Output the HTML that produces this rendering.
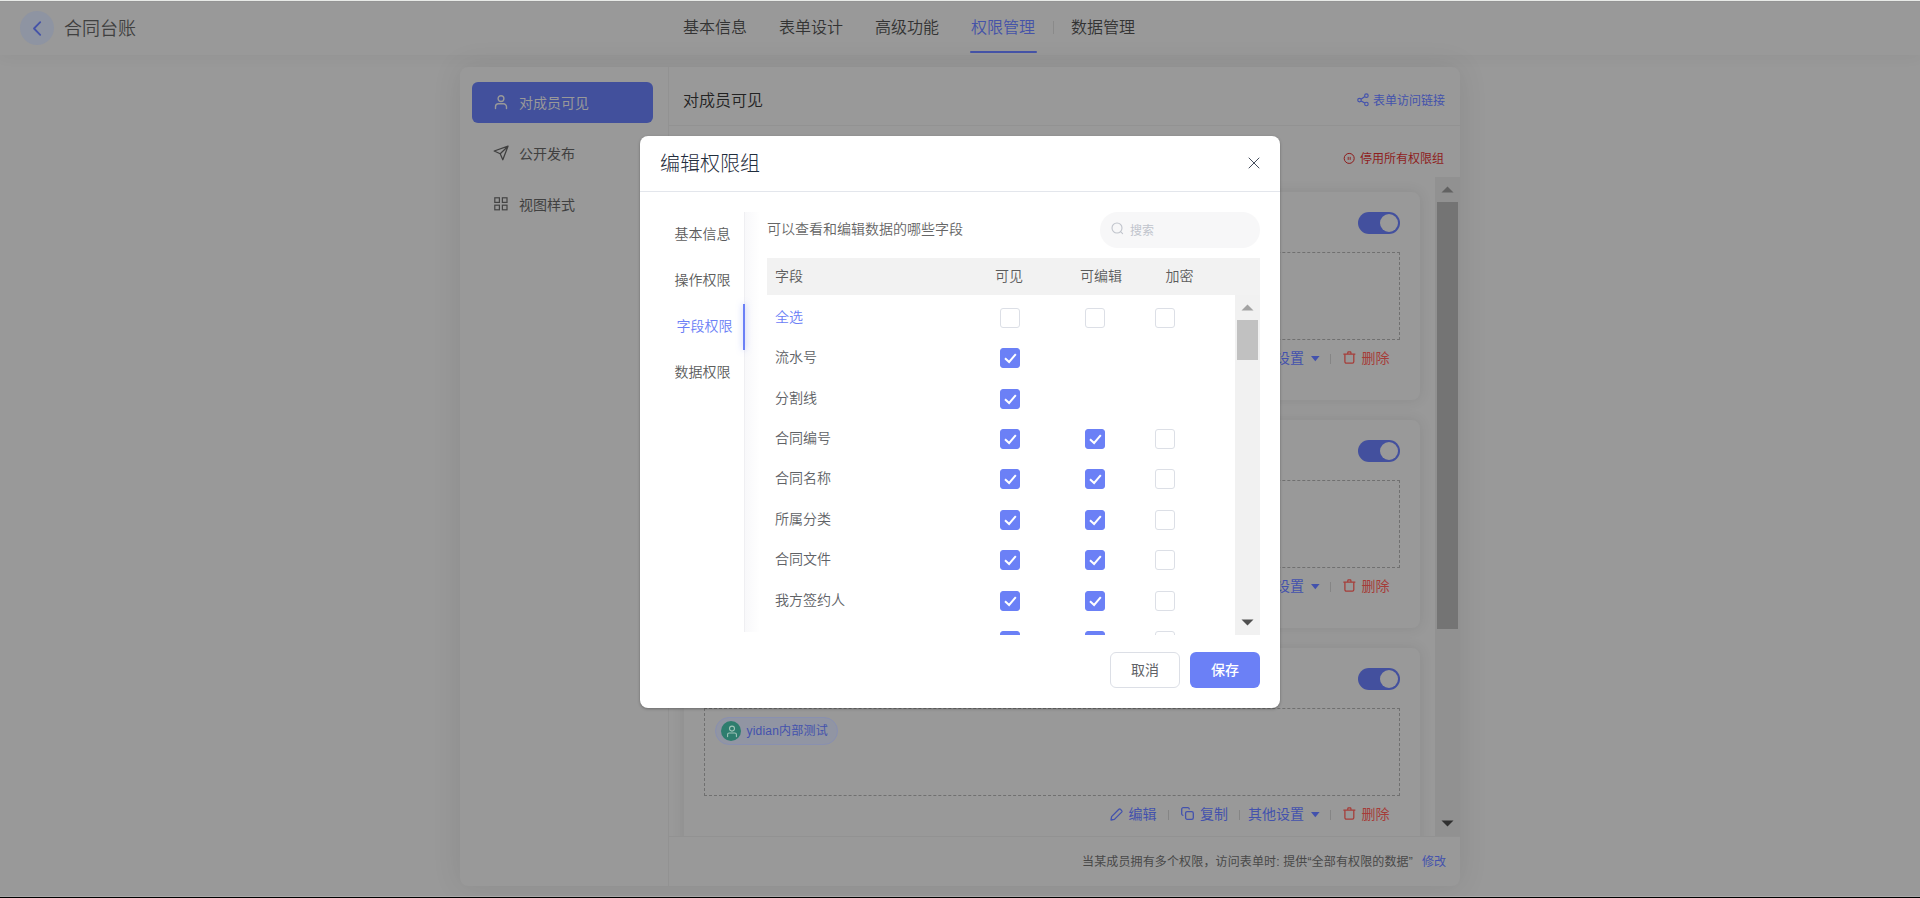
<!DOCTYPE html>
<html lang="zh-CN">
<head>
<meta charset="utf-8">
<title>合同台账 - 权限管理</title>
<style>
*{box-sizing:border-box;margin:0;padding:0}
html,body{width:1920px;height:898px;overflow:hidden}
body{background:#999;font-family:"Liberation Sans","Noto Sans CJK SC",sans-serif;font-size:14px;color:#333;position:relative;-webkit-font-smoothing:antialiased}
.abs{position:absolute}
.t{position:absolute;white-space:nowrap;line-height:1}
svg{position:absolute;overflow:visible}

/* ===== dimmed background page ===== */
#topline{left:0;top:0;width:1920px;height:1px;background:#e8eae7;z-index:50}
#topline2{left:0;top:1px;width:1920px;height:1px;background:#949494;z-index:50}
#botline{left:0;top:896px;width:1920px;height:1px;background:#a8a8a8;z-index:50}
#botline2{left:0;top:897px;width:1920px;height:1px;background:#000;z-index:50}

#header{left:0;top:0;width:1920px;height:55px;background:#999;box-shadow:0 2px 14px rgba(0,0,0,.045)}
#back{left:20px;top:10.5px;width:34px;height:34px;border-radius:50%;background:#8e94a2}
#apptitle{left:64px;top:20px;font-size:18px;color:#404040;font-weight:350}
.nav{top:19.5px;font-size:16px;color:#333;font-weight:350}
.nav.on{color:#4553a8}
#navline{left:970px;top:51px;width:67px;height:2px;border-radius:2px;background:#4553a8}
#navsep{left:1052.5px;top:21px;width:1px;height:13px;background:#8a8a8a}

#panel{left:460px;top:67px;width:1000px;height:819px;background:#999;border-radius:8px;box-shadow:0 0 30px rgba(0,0,0,.09)}
#sidediv{left:668px;top:67px;width:1px;height:819px;background:#929292}
#sideon{left:472px;top:82px;width:181px;height:41px;border-radius:6px;background:#42509c}
.side{font-size:14px;color:#404040;left:519px;font-weight:400}
#ctitle{left:683px;top:93px;font-size:16px;color:#222;font-weight:350}
#cdiv{left:669px;top:125px;width:791px;height:1px;background:#929292}
#fdiv{left:669px;top:836px;width:791px;height:1px;background:#929292}

#list{left:669px;top:177px;width:766px;height:659px;background:#999;overflow:hidden}
.card{left:15px;width:736px;height:208px;background:#999;border-radius:8px;box-shadow:0 0 14px rgba(0,0,0,.09)}
.dash{left:20px;top:60px;width:696px;height:88px;border:1px dashed #707070}
.sw{left:674px;top:20px;width:42px;height:22px;border-radius:11px;background:#43509e}
.sw i{position:absolute;right:2px;top:2px;width:18px;height:18px;border-radius:50%;background:#999}
.act{top:159px;font-size:14px}
.blue{color:#4352ad}
.red{color:#a63c38}
.vsep{top:162px;width:1px;height:10px;background:#858585}
.tag{left:31px;top:69px;width:123px;height:28px;border-radius:14px;background:#9195a3;border:1px solid #8990b0}
.ava{left:5px;top:3px;width:20px;height:20px;border-radius:50%;background:#2e7d6e}

#vtrack{left:1435px;top:177px;width:25px;height:659px;background:#919191}
#vthumb{left:1437px;top:202px;width:21px;height:427px;background:#747474}

/* ===== modal ===== */
#modal{left:640px;top:136px;width:640px;height:572px;background:#fff;border-radius:8px;z-index:20;box-shadow:0 1px 3px rgba(0,0,0,.3)}
#mtitle{left:20px;top:17.8px;font-size:20px;color:#1f2d3d;font-weight:300}
#mdiv{left:0;top:55px;width:640px;height:1px;background:#e3e6ec}
.mtab{font-size:14px;color:#5c5c5c;left:34.5px;font-weight:350}
#mtabborder{left:104px;top:76px;width:16px;height:420px;background:linear-gradient(90deg,#efeff2 0,#efeff2 1px,#f8f8fa 1px,#fff 16px)}
#mtabon{left:103px;top:168px;width:2px;height:46px;background:#6b80f6;box-shadow:0 0 6px rgba(107,128,246,.55)}
#mdesc{left:127px;top:86px;font-size:14px;color:#666;font-weight:350}
#search{left:460px;top:76px;width:160px;height:36px;border-radius:18px;background:#f7f7f8}
#search .t{left:30px;top:13px;font-size:12px;color:#c0c4cc}
#thead{left:127px;top:122px;width:493px;height:37px;background:#f2f2f2}
.th{top:133px;font-size:14px;color:#5c5c5c;font-weight:350}
#tbody{left:127px;top:159px;width:468px;height:340px;overflow:hidden}
.row{position:absolute;left:0;width:468px;height:40px}
.row .t{left:8px;top:12px;font-size:14px;color:#606266;font-weight:350}
.cb{position:absolute;top:10px;width:20px;height:20px;border-radius:3px;border:1px solid #dcdfe6;background:#fff}
.cb.on{background:#6b80f6;border-color:#6b80f6}
.cb svg{left:-1px;top:-1px}
.c1{left:233px}.c2{left:318px}.c3{left:388px}
#strack{left:595px;top:159px;width:25px;height:340px;background:#f1f1f1}
#sthumb{left:597px;top:184px;width:21px;height:40px;background:#c1c1c1}
.btn{top:516px;width:70px;height:36px;border-radius:6px;font-size:14px;text-align:center;line-height:34px}
#cancel{left:470px;border:1px solid #dcdfe6;color:#606266;background:#fff}
#save{left:550px;background:#6b80f6;color:#fff;font-weight:500;line-height:36px}
</style>
</head>
<body>
<!-- header -->
<div id="header" class="abs">
  <div id="back" class="abs"></div>
  <svg style="left:32px;top:20.5px" width="10" height="15" viewBox="0 0 10 15"><path d="M8.2 1.2 L2 7.5 L8.2 13.8" fill="none" stroke="#4553a8" stroke-width="1.8" stroke-linecap="round" stroke-linejoin="round"/></svg>
  <div id="apptitle" class="t">合同台账</div>
  <div class="t nav" style="left:683px">基本信息</div>
  <div class="t nav" style="left:779px">表单设计</div>
  <div class="t nav" style="left:875px">高级功能</div>
  <div class="t nav on" style="left:971px">权限管理</div>
  <div id="navsep" class="abs"></div>
  <div class="t nav" style="left:1071px">数据管理</div>
  <div id="navline" class="abs"></div>
</div>

<!-- main panel -->
<div id="panel" class="abs"></div>
<div id="sidediv" class="abs"></div>
<div id="sideon" class="abs"></div>
<svg style="left:494px;top:94px" width="14" height="16" viewBox="0 0 14 16"><circle cx="7" cy="4.6" r="2.9" fill="none" stroke="#999" stroke-width="1.4"/><path d="M1.5 14.6 V12.8 a3 3 0 0 1 3-3 h5 a3 3 0 0 1 3 3 V14.6" fill="none" stroke="#999" stroke-width="1.4" stroke-linecap="round"/></svg>
<svg style="left:493px;top:145px" width="16" height="16" viewBox="0 0 16 16"><path d="M15 1.2 L1.2 6 L7.2 8.7 L9.8 14.8 Z M15 1.2 L7.2 8.7" fill="none" stroke="#3f3f3f" stroke-width="1.25" stroke-linejoin="round" stroke-linecap="round"/></svg>
<svg style="left:494px;top:197px" width="14" height="14" viewBox="0 0 14 14"><g fill="none" stroke="#444" stroke-width="1.2"><rect x="0.8" y="0.8" width="4.6" height="4.6"/><rect x="8.4" y="0.8" width="4.6" height="4.6"/><rect x="0.8" y="8.2" width="4.6" height="4.6"/><rect x="8.4" y="8.2" width="4.6" height="4.6"/></g></svg>
<div class="t side" style="top:96px;color:#999;font-weight:400">对成员可见</div>
<div class="t side" style="top:147px">公开发布</div>
<div class="t side" style="top:198px">视图样式</div>
<div id="ctitle" class="t">对成员可见</div>
<div id="cdiv" class="abs"></div>
<svg style="left:1356.8px;top:93px" width="12" height="13.85" viewBox="0 0 13 15"><g fill="none" stroke="#4352ad" stroke-width="1.25"><circle cx="10.2" cy="2.9" r="1.9"/><circle cx="2.7" cy="7.7" r="1.9"/><circle cx="10.2" cy="11.9" r="1.9"/><path d="M4.4 6.7 L8.5 3.9 M4.4 8.7 L8.5 10.9"/></g></svg>
<svg style="left:1343px;top:152px" width="13" height="13" viewBox="0 0 13 13"><circle cx="6.2" cy="6.4" r="5" fill="none" stroke="#8f1a1a" stroke-width="1"/><path d="M5.2 4.9 V7.9 M7.2 4.9 V7.9" stroke="#8f1a1a" stroke-width="0.9"/></svg>
<div class="t blue" style="left:1373px;top:95px;font-size:12px">表单访问链接</div>
<div class="t" style="left:1360px;top:153px;font-size:12px;color:#8e1d1d">停用所有权限组</div>

<div id="list" class="abs">
  <div class="card abs" style="top:15px">
    <div class="sw abs"><i></i></div>
    <div class="dash abs"></div>
    <div class="t act blue" style="left:564px">其他设置</div>
    <svg style="left:626.8px;top:164.3px" width="9" height="6" viewBox="0 0 9 6"><path d="M0 0 H8.6 L4.3 5.3 Z" fill="#4352ad"/></svg>
    <div class="vsep abs" style="left:646px"></div>
    <svg style="left:659.2px;top:158.3px" width="13" height="14" viewBox="0 0 13 14"><g fill="none" stroke="#a63c38" stroke-width="1.25" stroke-linejoin="round"><path d="M0.8 4 H11.9" stroke-linecap="round"/><path d="M4.6 3.8 L5 1.9 H7.7 L8.1 3.8"/><path d="M1.9 4.2 V11.7 a1.4 1.4 0 0 0 1.4 1.4 H9.4 a1.4 1.4 0 0 0 1.4 -1.4 V4.2"/></g></svg>
    <div class="t act red" style="left:677.5px">删除</div>
  </div>
  <div class="card abs" style="top:243px">
    <div class="sw abs"><i></i></div>
    <div class="dash abs"></div>
    <div class="t act blue" style="left:564px">其他设置</div>
    <svg style="left:626.8px;top:164.3px" width="9" height="6" viewBox="0 0 9 6"><path d="M0 0 H8.6 L4.3 5.3 Z" fill="#4352ad"/></svg>
    <div class="vsep abs" style="left:646px"></div>
    <svg style="left:659.2px;top:158.3px" width="13" height="14" viewBox="0 0 13 14"><g fill="none" stroke="#a63c38" stroke-width="1.25" stroke-linejoin="round"><path d="M0.8 4 H11.9" stroke-linecap="round"/><path d="M4.6 3.8 L5 1.9 H7.7 L8.1 3.8"/><path d="M1.9 4.2 V11.7 a1.4 1.4 0 0 0 1.4 1.4 H9.4 a1.4 1.4 0 0 0 1.4 -1.4 V4.2"/></g></svg>
    <div class="t act red" style="left:677.5px">删除</div>
  </div>
  <div class="card abs" style="top:471px">
    <div class="sw abs"><i></i></div>
    <div class="dash abs"></div>
    <div class="tag abs"><div class="ava abs"></div><svg style="left:10px;top:7px" width="12" height="13" viewBox="0 0 12 13"><g fill="none" stroke="#9fc4b8" stroke-width="1.1"><circle cx="6" cy="3.6" r="2.5"/><path d="M1.6 11.6 V9.6 a1.6 1.6 0 0 1 1.6 -1.6 H8.8 a1.6 1.6 0 0 1 1.6 1.6 V11.6" stroke-linecap="round"/></g></svg><div class="t" style="left:30.5px;top:7px;font-size:12px;color:#4352ad;letter-spacing:.2px">yidian内部测试</div></div>
    <svg style="left:425.5px;top:159.5px" width="13" height="13" viewBox="0 0 13 13"><path d="M1 12 L1.6 8.6 L8.9 1.3 a1.1 1.1 0 0 1 1.5 0 L11.7 2.6 a1.1 1.1 0 0 1 0 1.5 L4.4 11.4 Z" fill="none" stroke="#4352ad" stroke-width="1.3" stroke-linejoin="round"/></svg>
    <div class="t act blue" style="left:444.5px">编辑</div>
    <div class="vsep abs" style="left:484px"></div>
    <svg style="left:497px;top:159px" width="13" height="13" viewBox="0 0 13 13"><g fill="none" stroke="#4352ad" stroke-width="1.3"><rect x="4.6" y="4.6" width="7.7" height="7.7" rx="1.6"/><path d="M2.4 8.3 H2.2 a1.5 1.5 0 0 1 -1.5 -1.5 V2.2 a1.5 1.5 0 0 1 1.5 -1.5 H6.8 a1.5 1.5 0 0 1 1.5 1.5 V2.4"/></g></svg>
    <div class="t act blue" style="left:516px">复制</div>
    <div class="vsep abs" style="left:555px"></div>
    <div class="t act blue" style="left:564px">其他设置</div>
    <svg style="left:626.8px;top:164.3px" width="9" height="6" viewBox="0 0 9 6"><path d="M0 0 H8.6 L4.3 5.3 Z" fill="#4352ad"/></svg>
    <div class="vsep abs" style="left:646px"></div>
    <svg style="left:659.2px;top:158.3px" width="13" height="14" viewBox="0 0 13 14"><g fill="none" stroke="#a63c38" stroke-width="1.25" stroke-linejoin="round"><path d="M0.8 4 H11.9" stroke-linecap="round"/><path d="M4.6 3.8 L5 1.9 H7.7 L8.1 3.8"/><path d="M1.9 4.2 V11.7 a1.4 1.4 0 0 0 1.4 1.4 H9.4 a1.4 1.4 0 0 0 1.4 -1.4 V4.2"/></g></svg>
    <div class="t act red" style="left:677.5px">删除</div>
  </div>
</div>
<div id="vtrack" class="abs"></div>
<div id="vthumb" class="abs"></div>
<svg style="left:1441px;top:186px" width="13" height="7" viewBox="0 0 13 7"><path d="M0.5 6.5 L6.5 0.5 L12.5 6.5 Z" fill="#626262"/></svg>
<svg style="left:1441px;top:819.5px" width="13" height="7" viewBox="0 0 13 7"><path d="M0.5 0.5 L6.5 6.5 L12.5 0.5 Z" fill="#303030"/></svg>
<div id="fdiv" class="abs"></div>
<div class="t" style="left:1082px;top:855.5px;font-size:12px;color:#484848;letter-spacing:.14px">当某成员拥有多个权限，访问表单时: 提供“全部有权限的数据”</div>
<div class="t blue" style="left:1422px;top:855.5px;font-size:12px">修改</div>

<!-- modal -->
<div id="modal" class="abs">
  <div id="mtitle" class="t">编辑权限组</div>
  <svg style="left:608px;top:21px" width="12" height="12" viewBox="0 0 12 12"><path d="M1 1 L11 11 M11 1 L1 11" stroke="#444c5c" stroke-width="1" stroke-linecap="round"/></svg>
  <div id="mdiv" class="abs"></div>
  <div id="mtabborder" class="abs"></div>
  <div class="t mtab" style="top:90.5px">基本信息</div>
  <div class="t mtab" style="top:136.5px">操作权限</div>
  <div class="t mtab" style="top:182.5px;left:36.5px;color:#6b80f6">字段权限</div>
  <div class="t mtab" style="top:228.5px">数据权限</div>
  <div id="mtabon" class="abs"></div>
  <div id="mdesc" class="t">可以查看和编辑数据的哪些字段</div>
  <div id="search" class="abs"><svg style="left:11px;top:10px" width="14" height="14" viewBox="0 0 14 14"><circle cx="6" cy="6" r="5" fill="none" stroke="#c0c4cc" stroke-width="1.1"/><path d="M9.6 9.6 L11.6 11.6" stroke="#c0c4cc" stroke-width="1.1" stroke-linecap="round"/></svg><div class="t">搜索</div></div>
  <div id="thead" class="abs"></div>
  <div class="t th" style="left:135px">字段</div>
  <div class="t th" style="left:355px">可见</div>
  <div class="t th" style="left:440px">可编辑</div>
  <div class="t th" style="left:525.5px">加密</div>
  <div id="tbody" class="abs">
    <div class="row" style="top:3px"><div class="t" style="color:#6b80f6">全选</div><div class="cb c1"></div><div class="cb c2"></div><div class="cb c3"></div></div>
    <div class="row" style="top:43px"><div class="t">流水号</div><div class="cb c1 on"><svg width="20" height="20" viewBox="0 0 20 20"><path d="M5 10.2 L9.1 14 L15.8 6.2" fill="none" stroke="#fff" stroke-width="2"/></svg></div></div>
    <div class="row" style="top:84px"><div class="t">分割线</div><div class="cb c1 on"><svg width="20" height="20" viewBox="0 0 20 20"><path d="M5 10.2 L9.1 14 L15.8 6.2" fill="none" stroke="#fff" stroke-width="2"/></svg></div></div>
    <div class="row" style="top:124px"><div class="t">合同编号</div><div class="cb c1 on"><svg width="20" height="20" viewBox="0 0 20 20"><path d="M5 10.2 L9.1 14 L15.8 6.2" fill="none" stroke="#fff" stroke-width="2"/></svg></div><div class="cb c2 on"><svg width="20" height="20" viewBox="0 0 20 20"><path d="M5 10.2 L9.1 14 L15.8 6.2" fill="none" stroke="#fff" stroke-width="2"/></svg></div><div class="cb c3"></div></div>
    <div class="row" style="top:164px"><div class="t">合同名称</div><div class="cb c1 on"><svg width="20" height="20" viewBox="0 0 20 20"><path d="M5 10.2 L9.1 14 L15.8 6.2" fill="none" stroke="#fff" stroke-width="2"/></svg></div><div class="cb c2 on"><svg width="20" height="20" viewBox="0 0 20 20"><path d="M5 10.2 L9.1 14 L15.8 6.2" fill="none" stroke="#fff" stroke-width="2"/></svg></div><div class="cb c3"></div></div>
    <div class="row" style="top:205px"><div class="t">所属分类</div><div class="cb c1 on"><svg width="20" height="20" viewBox="0 0 20 20"><path d="M5 10.2 L9.1 14 L15.8 6.2" fill="none" stroke="#fff" stroke-width="2"/></svg></div><div class="cb c2 on"><svg width="20" height="20" viewBox="0 0 20 20"><path d="M5 10.2 L9.1 14 L15.8 6.2" fill="none" stroke="#fff" stroke-width="2"/></svg></div><div class="cb c3"></div></div>
    <div class="row" style="top:245px"><div class="t">合同文件</div><div class="cb c1 on"><svg width="20" height="20" viewBox="0 0 20 20"><path d="M5 10.2 L9.1 14 L15.8 6.2" fill="none" stroke="#fff" stroke-width="2"/></svg></div><div class="cb c2 on"><svg width="20" height="20" viewBox="0 0 20 20"><path d="M5 10.2 L9.1 14 L15.8 6.2" fill="none" stroke="#fff" stroke-width="2"/></svg></div><div class="cb c3"></div></div>
    <div class="row" style="top:286px"><div class="t">我方签约人</div><div class="cb c1 on"><svg width="20" height="20" viewBox="0 0 20 20"><path d="M5 10.2 L9.1 14 L15.8 6.2" fill="none" stroke="#fff" stroke-width="2"/></svg></div><div class="cb c2 on"><svg width="20" height="20" viewBox="0 0 20 20"><path d="M5 10.2 L9.1 14 L15.8 6.2" fill="none" stroke="#fff" stroke-width="2"/></svg></div><div class="cb c3"></div></div>
    <div class="row" style="top:326px"><div class="t" style="top:16px">对方签约人</div><div class="cb c1 on"><svg width="20" height="20" viewBox="0 0 20 20"><path d="M5 10.2 L9.1 14 L15.8 6.2" fill="none" stroke="#fff" stroke-width="2"/></svg></div><div class="cb c2 on"><svg width="20" height="20" viewBox="0 0 20 20"><path d="M5 10.2 L9.1 14 L15.8 6.2" fill="none" stroke="#fff" stroke-width="2"/></svg></div><div class="cb c3"></div></div>
  </div>
  <div id="strack" class="abs"></div>
  <div id="sthumb" class="abs"></div>
  <svg style="left:601px;top:168px" width="13" height="7" viewBox="0 0 13 7"><path d="M0.5 6.5 L6.5 0.5 L12.5 6.5 Z" fill="#a3a3a3"/></svg>
  <svg style="left:601px;top:483px" width="13" height="7" viewBox="0 0 13 7"><path d="M0.5 0.5 L6.5 6.5 L12.5 0.5 Z" fill="#505050"/></svg>
  <div id="cancel" class="abs btn">取消</div>
  <div id="save" class="abs btn">保存</div>
</div>

<div id="topline" class="abs"></div><div id="topline2" class="abs"></div>
<div id="botline" class="abs"></div><div id="botline2" class="abs"></div>
</body>
</html>
